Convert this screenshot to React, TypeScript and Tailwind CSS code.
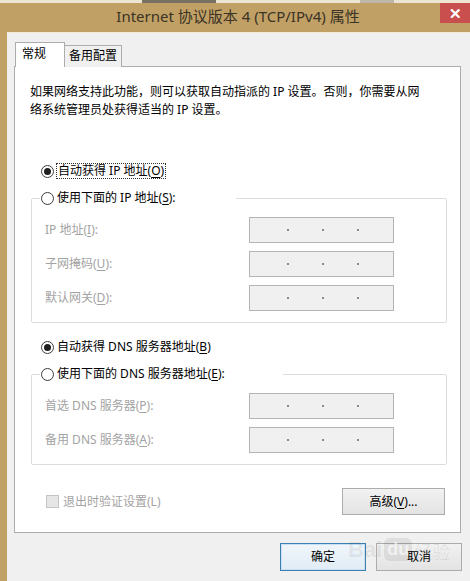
import React from "react";

const font = "font-['Noto_Sans','Noto_Sans_CJK_SC',sans-serif]";

const Radio = ({ checked }: { checked?: boolean }) => (
  <span className="flex h-[13px] w-[13px] shrink-0 items-center justify-center rounded-full border border-[#3c3c3c] bg-white">
    {checked && <span className="h-[7px] w-[7px] rounded-full bg-[#1e1e1e]" />}
  </span>
);

const Key = ({ k }: { k: string }) => <span className="underline underline-offset-2">{k}</span>;

const IpBox = () => (
  <div className="flex h-[26px] w-[145px] items-center gap-[33px] border border-[#b4b4b4] bg-[#f0f0f0] pl-[37px]">
    <span className="h-[2px] w-[2px] bg-[#8a8a8a]" />
    <span className="h-[2px] w-[2px] bg-[#8a8a8a]" />
    <span className="h-[2px] w-[2px] bg-[#8a8a8a]" />
  </div>
);

const Field = ({ label }: { label: React.ReactNode }) => (
  <div className="flex items-center pl-[5px]">
    <div className="w-[204px] text-[12px] text-[#a3a3a3]">{label}</div>
    <IpBox />
  </div>
);

const Group = ({ legend, padRight, children }: { legend: React.ReactNode; padRight: string; children: React.ReactNode }) => (
  <fieldset className="ml-[16px] mr-[13px] rounded-[2px] border border-[#dcdcdc] pb-[11px] pl-[8px]">
    <legend className={`flex h-[18px] items-center pl-px ${padRight}`}>
      <Radio />
      <span className="ml-[3px] text-[12px] text-black">{legend}</span>
    </legend>
    <div className="flex flex-col gap-[8px] pt-[10px]">{children}</div>
  </fieldset>
);

export default function App() {
  return (
    <div className={`flex h-[581px] w-[470px] flex-col overflow-hidden bg-[#c1a065] ${font}`}>
      {/* window behind */}
      <div className="flex h-[3px] shrink-0 bg-[#ede4d3]">
        <div className="ml-[142px] w-[74px] bg-[#7a7062]" />
        <div className="ml-[144px] w-[34px] bg-[#bdb6aa]" />
      </div>

      {/* title bar */}
      <div className="flex h-[29px] shrink-0">
        <div className="flex flex-1 items-center justify-center pl-[36px] pb-[2px] text-[15px] text-[#3a3326]">
          Internet 协议版本 4 (TCP/IPv4) 属性
        </div>
        <div className="flex h-[20px] w-[30px] items-center justify-center bg-[#c94f4f] text-[15px] font-bold leading-none text-white">
          ✕
        </div>
      </div>
      <div className="ml-[7px] h-px shrink-0 bg-[#f6e9d4]" />

      {/* client */}
      <div className="relative ml-[7px] flex flex-1 flex-col bg-[#f0f0f0] pl-[7px] pt-[9px]">
        <div className="relative z-10 -mb-px ml-px flex items-end text-[12px] text-black">
          <div className="flex h-[25px] w-[50px] items-center border border-b-0 border-[#adadad] bg-white pb-[2px] pl-[6px]">常规</div>
          <div className="flex h-[22px] w-[57px] items-center border border-b-0 border-l-0 border-[#adadad] bg-[#f0f0f0] pb-[2px] pl-[4px]">
            备用配置
          </div>
        </div>

        <div className="flex w-[447px] flex-col border border-[#adadad] bg-white pb-[17px] pt-[16px]">
          <p className="pl-[15px] text-[12px] leading-[18px] text-black">
            <span className="whitespace-nowrap">如果网络支持此功能，则可以获取自动指派的 IP 设置。否则，你需要从网</span>
            <br />
            <span className="whitespace-nowrap">络系统管理员处获得适当的 IP 设置。</span>
          </p>

          <div className="ml-[26px] mt-[43px] flex h-[18px] items-center">
            <Radio checked />
            <span className="ml-[2px] border border-dotted border-[#333] px-px text-[12px] leading-[14px] text-black">
              自动获得 IP 地址(<Key k="O" />)
            </span>
          </div>

          <div className="mt-[9px]">
            <Group
              padRight="pr-[60px]"
              legend={
                <>
                  使用下面的 IP 地址(<Key k="S" />):
                </>
              }
            >
              <Field label={<>IP 地址(<Key k="I" />):</>} />
              <Field label={<>子网掩码(<Key k="U" />):</>} />
              <Field label={<>默认网关(<Key k="D" />):</>} />
            </Group>
          </div>

          <div className="ml-[26px] mt-[15px] flex h-[18px] items-center">
            <Radio checked />
            <span className="ml-[3px] text-[12px] text-black">
              自动获得 DNS 服务器地址(<Key k="B" />)
            </span>
          </div>

          <div className="mt-[9px]">
            <Group
              padRight="pr-[58px]"
              legend={
                <>
                  使用下面的 DNS 服务器地址(<Key k="E" />):
                </>
              }
            >
              <Field label={<>首选 DNS 服务器(<Key k="P" />):</>} />
              <Field label={<>备用 DNS 服务器(<Key k="A" />):</>} />
            </Group>
          </div>

          <div className="mt-[23px] flex items-center justify-between pl-[31px] pr-[15px]">
            <div className="flex items-center gap-[4px]">
              <span className="h-[13px] w-[13px] border border-[#c4c4c4] bg-[#e6e6e6]" />
              <span className="text-[12px] text-[#a3a3a3]">退出时验证设置(L)</span>
            </div>
            <button className="flex h-[27px] w-[103px] items-center justify-center border border-[#acacac] bg-gradient-to-b from-[#f2f2f2] to-[#e3e3e3] text-[12px] text-black">
              高级(<Key k="V" />)...
            </button>
          </div>
        </div>

        <div className="mt-[10px] flex justify-end gap-[10px] pr-[8px]">
          <button className="flex h-[28px] w-[86px] items-center justify-center border border-[#3c7fb1] bg-gradient-to-b from-[#f0f6fb] to-[#e1ecf5] text-[12px] text-black shadow-[inset_0_0_0_1px_#c8e0f4]">
            确定
          </button>
          <button className="flex h-[28px] w-[86px] items-center justify-center border border-[#acacac] bg-gradient-to-b from-[#f2f2f2] to-[#e3e3e3] text-[12px] text-black">
            取消
          </button>
        </div>

        {/* baidu watermark */}
        <div className="pointer-events-none absolute left-[341px] top-[505px] flex items-end gap-[2px] text-black/[0.07]">
          <span className="text-[22px] font-bold leading-none font-['Liberation_Sans',sans-serif]">Bai</span>
          <span className="rounded-[6px] bg-black/[0.07] px-[3px] text-[18px] font-bold leading-tight text-white/60 font-['Liberation_Sans',sans-serif]">
            du
          </span>
          <span className="text-[18px] leading-none">经验</span>
        </div>
      </div>
    </div>
  );
}
